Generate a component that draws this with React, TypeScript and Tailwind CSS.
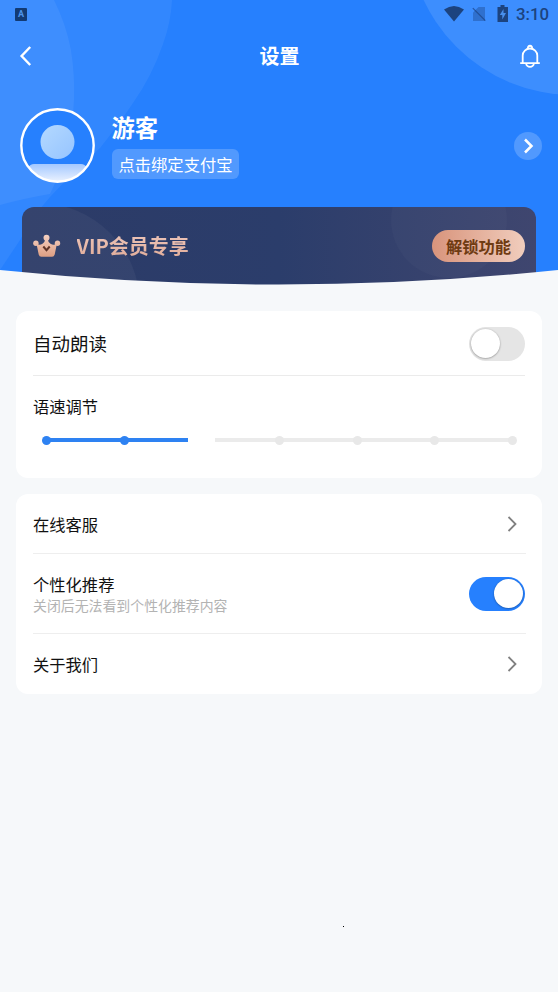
import type { ReactNode } from 'react';
import { clsx } from 'clsx';

const SPEED_STEPS = [0, 1, 2, 3, 4, 5, 6];
const SPEED_VALUE = 2;

export default function App() {
  return (
    <div className="relative min-h-[992px] w-[558px] bg-[#f6f8fa] font-['Noto_Sans_CJK_SC','Noto_Sans',sans-serif] text-[#111111]">
      <Header />
      <main className="flex flex-col gap-4 px-4 pt-[26px]">
        <section className="h-[167px] rounded-xl bg-white pr-[17px] pl-[17px]">
          <div className="flex h-[65px] items-center justify-between border-b border-[#ebebeb] pt-px">
            <span className="text-[18.5px] leading-none">自动朗读</span>
            <Toggle on={false} />
          </div>
          <div className="pt-[21px] text-[16.3px] leading-[18px]">语速调节</div>
          <SpeedSlider />
        </section>
        <section className="h-[200px] rounded-xl bg-white pr-4 pl-[17px]">
          <Row className="h-[60px] border-b border-[#eeeeee]">
            <span className="pt-px text-[16.3px] leading-none">在线客服</span>
            <RowArrow />
          </Row>
          <Row className="h-20 border-b border-[#eeeeee] pr-px">
            <div className="flex flex-col gap-[5px]">
              <span className="text-[16.3px] leading-[17px]">个性化推荐</span>
              <span className="text-[13.9px] leading-[14px] text-[#b3b3b3]">关闭后无法看到个性化推荐内容</span>
            </div>
            <Toggle on />
          </Row>
          <Row className="h-[60px]">
            <span className="text-[16.3px] leading-none">关于我们</span>
            <RowArrow />
          </Row>
        </section>
      </main>
      <span className="absolute top-[926px] left-[343px] size-px bg-black" />
    </div>
  );
}

function Header() {
  return (
    <header className="relative h-[285px] overflow-hidden bg-[#2680fe] text-white">
      <svg className="absolute inset-0" width="558" height="285" viewBox="0 0 558 285">
        <path d="M0 0H172Q171 22 163 44Q152 76 133 103Q116 128 100 148Q74 171 50 197Q32 217 20 240L0 270Z" fill="#fff" fillOpacity="0.06" />
        <path d="M0 0H54Q66 24 71 50Q75 76 74 100Q72 150 50 194Q26 198 0 205Z" fill="#fff" fillOpacity="0.06" />
        <circle cx="573" cy="-70" r="165" fill="#fff" fillOpacity="0.11" />
      </svg>
      <div className="relative flex h-full flex-col">
        <StatusBar />
        <nav className="flex h-14 items-center justify-between pr-[18px] pl-[19px]">
          <svg width="20" height="20" viewBox="0 0 20 20" fill="none" stroke="currentColor" strokeWidth="2.4">
            <path d="M11.2 1 2.600 10l8.600 9" />
          </svg>
          <h1 className="text-[20px] leading-none font-bold">设置</h1>
          <BellIcon />
        </nav>
        <div className="flex h-[123px] items-center pr-4 pl-[19.5px]">
          <Avatar />
          <div className="ml-[17px] flex flex-1 flex-col items-start gap-2 pt-px">
            <span className="text-[23.3px] leading-7 font-bold">游客</span>
            <span className="flex h-[30px] items-center rounded-md bg-white/20 px-[7px] text-[16.3px] leading-none">
              点击绑定支付宝
            </span>
          </div>
          <span className="flex size-7 items-center justify-center rounded-full bg-white/20">
            <svg width="12" height="16" viewBox="0 0 12 16" fill="none" stroke="currentColor" strokeWidth="2.5">
              <path d="m3 1.500 6.500 6.500-6.500 6.500" />
            </svg>
          </span>
        </div>
        <VipBanner />
      </div>
      <svg className="absolute bottom-0 left-0" width="558" height="16" viewBox="0 0 558 16">
        <path d="M0 1Q279 30 558 1V16H0Z" fill="#f6f8fa" />
      </svg>
    </header>
  );
}

function StatusBar() {
  return (
    <div className="flex h-7 items-center justify-between pr-[9px] pl-[15px] text-[#1c437f]">
      <span className="flex h-[13px] w-3 items-center justify-center rounded-[1px] bg-[#123a73] font-['Roboto'] text-[9px] leading-none font-bold text-[#4f94ea]">
        A
      </span>
      <div className="flex items-center">
        <svg width="20" height="16" viewBox="0 0 20 16" fill="currentColor">
          <path d="M0 3.500Q10-3.500 20 3.500L10 15.500Z" />
        </svg>
        <svg className="ml-2" width="15" height="16" viewBox="0 0 15 16">
          <path d="M6.500 1H13V15H1V6.500Z" fill="#1a4080" fillOpacity="0.38" />
          <path d="m.8 2.200 12.500 12.500" stroke="#1a4080" strokeOpacity=".7" strokeWidth="1.200" />
        </svg>
        <svg className="ml-[10px]" width="12" height="18" viewBox="0 0 12 18" fill="currentColor">
          <path d="M3.500 0h4v2H11v15H.5V2h3z" />
          <path d="M6.500 4 2.800 10h2.500v4.500l3.700-6.500H6.500z" fill="#488fec" />
        </svg>
        <span className="ml-[7px] font-['Roboto'] text-[16.8px] leading-none font-medium">3:10</span>
      </div>
    </div>
  );
}

function BellIcon() {
  return (
    <svg width="20" height="24" viewBox="0 0 20 24" fill="none" stroke="currentColor" strokeWidth="1.800">
      <path d="M8 4.500a2.100 2.100 0 1 1 4 0" />
      <path d="M.2 19.200h19.600M2.700 19v-7.500a7.300 7 0 0 1 14.600 0V19" />
      <path d="M6.200 19.500a3.800 3.300 0 0 0 7.600 0" />
    </svg>
  );
}

function Avatar() {
  return (
    <svg width="75" height="75" viewBox="0 0 75 75">
      <defs>
        <linearGradient id="head" x1="0" y1="0" x2="1" y2="1">
          <stop stopColor="#b4d9ff" />
          <stop offset="1" stopColor="#96c4ff" />
        </linearGradient>
        <linearGradient id="body" x1="0" y1="0" x2="0" y2="1">
          <stop stopColor="#a3c8ff" />
          <stop offset="1" stopColor="#f0f5ff" />
        </linearGradient>
        <clipPath id="ring">
          <circle cx="37.500" cy="37.500" r="36" />
        </clipPath>
      </defs>
      <circle cx="37.500" cy="37.500" r="36" fill="#2680fe" />
      <circle cx="37.500" cy="34" r="17" fill="url(#head)" />
      <path d="M8 60q2-4 6-4h47q4 0 6 4v15H8z" fill="url(#body)" clipPath="url(#ring)" />
      <circle cx="37.500" cy="37.500" r="36.200" fill="none" stroke="#fff" strokeWidth="2.400" />
    </svg>
  );
}

function VipBanner() {
  return (
    <div className="relative mx-[22px] h-[78px] w-[514px] overflow-hidden rounded-t-xl bg-linear-to-r from-[#2c3b67] via-[#2b3d6b] to-[#3f466f]">
      <svg className="absolute inset-0" width="514" height="78" viewBox="0 0 514 78">
        <circle cx="16" cy="98" r="102" fill="#fff" fillOpacity="0.045" />
        <circle cx="427" cy="13" r="58" fill="#fff" fillOpacity="0.025" />
      </svg>
      <div className="relative flex items-center pt-[23px] pr-[11px] pl-[11px]">
        <CrownIcon />
        <span className="ml-[15.5px] flex-1 bg-linear-to-b from-[#efc9be] to-[#dfa995] bg-clip-text text-[20px] leading-8 font-bold text-transparent">
          VIP会员专享
        </span>
        <span className="flex h-8 w-[93px] items-center justify-center rounded-full bg-linear-to-r from-[#d8947c] to-[#f0cdbd] text-[16.3px] leading-none font-bold text-[#6f3b12]">
          解锁功能
        </span>
      </div>
    </div>
  );
}

function CrownIcon() {
  return (
    <svg width="28" height="24" viewBox="0 0 28 24">
      <defs>
        <linearGradient id="crown" gradientUnits="userSpaceOnUse" x1="0" y1="0" x2="0" y2="24">
          <stop stopColor="#f6d2c4" />
          <stop offset="1" stopColor="#dc9c80" />
        </linearGradient>
      </defs>
      <g fill="url(#crown)">
        <circle cx="13.500" cy="3.800" r="3" />
        <circle cx="2.900" cy="9.300" r="2.700" />
        <circle cx="24.500" cy="9.300" r="2.700" />
        <path d="M3.500 9.800Q6.500 11.500 9.500 9.800Q12 8 12.300 5h2.400Q15 8 17.500 9.800Q20.500 11.500 23.900 9.800L21.700 20.500q-.6 2.200-2.600 2.200H8.300q-2 0-2.600-2.200Z" />
      </g>
      <path d="m10.300 12.500 3.200 3.700 3.200-3.700" fill="none" stroke="#5f3428" strokeWidth="2" />
    </svg>
  );
}

function Toggle({ on }: { on: boolean }) {
  return (
    <span
      role="switch"
      aria-checked={on}
      className={clsx(
        'flex h-[34px] w-14 items-center rounded-full px-[2px]',
        on ? 'justify-end bg-[#2680fe]' : 'justify-start bg-[#e5e5e5]',
      )}
    >
      <span className="size-[29px] rounded-full bg-white shadow-[0_0.5px_2px_rgba(0,0,0,0.4)]" />
    </span>
  );
}

function SpeedSlider() {
  return (
    <div className="relative mt-5 ml-[9px] flex h-[10px] w-[475px] items-center justify-between">
      <span className="absolute left-[5px] h-1 w-[141px] bg-[#2e82f2]" />
      <span className="absolute right-[5px] left-[173px] h-1 bg-[#ebebeb]" />
      {SPEED_STEPS.map((step) => (
        <span
          key={step}
          className={clsx(
            'relative size-[9px] rounded-full',
            step < SPEED_VALUE && 'bg-[#2e82f2]',
            step === SPEED_VALUE && 'invisible',
            step > SPEED_VALUE && 'bg-[#e8e8e8]',
          )}
        />
      ))}
    </div>
  );
}

function Row({ className, children }: { className?: string; children: ReactNode }) {
  return <div className={clsx('flex items-center justify-between', className)}>{children}</div>;
}

function RowArrow() {
  return (
    <svg className="mr-2" width="12" height="16" viewBox="0 0 12 16" fill="none" stroke="#808080" strokeWidth="1.800">
      <path d="m2.500 1 7 7-7 7" />
    </svg>
  );
}
